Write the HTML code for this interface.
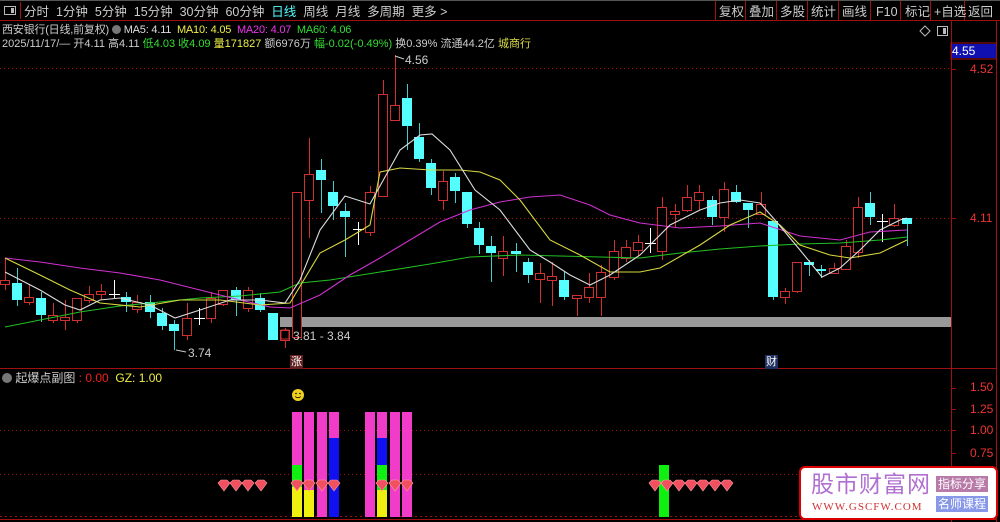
<!DOCTYPE html>
<html><head><meta charset="utf-8">
<style>
body{margin:0;background:#000;width:1000px;height:522px;overflow:hidden;position:relative;font-family:"Liberation Sans","Noto Sans CJK SC",sans-serif;font-size:12px;color:#ccc}
.t{position:absolute;white-space:nowrap;line-height:14px}
svg{position:absolute;left:0;top:0}
</style></head><body>
<svg id="s" width="1000" height="522" xmlns="http://www.w3.org/2000/svg"></svg>
<div class="t" style="left:24px;top:5px;font-size:12.5px;word-spacing:0">分时 &nbsp;1分钟 &nbsp;5分钟 &nbsp;15分钟 &nbsp;30分钟 &nbsp;60分钟 &nbsp;<span style="color:#5ff">日线</span> &nbsp;周线 &nbsp;月线 &nbsp;多周期 &nbsp;更多 &gt;</div>
<div class="t" style="left:719px;top:5px;font-size:12.5px">复权</div>
<div class="t" style="left:749px;top:5px;font-size:12.5px">叠加</div>
<div class="t" style="left:780px;top:5px;font-size:12.5px">多股</div>
<div class="t" style="left:811px;top:5px;font-size:12.5px">统计</div>
<div class="t" style="left:842px;top:5px;font-size:12.5px">画线</div>
<div class="t" style="left:876px;top:5px;font-size:12.5px">F10</div>
<div class="t" style="left:905px;top:5px;font-size:12.5px">标记</div>
<div class="t" style="left:934px;top:5px;font-size:12.5px">+自选</div>
<div class="t" style="left:968px;top:5px;font-size:12.5px">返回</div>
<div class="t" style="left:2px;top:23px;font-size:11px;letter-spacing:-0.2px">西安银行(日线,前复权) <span style="display:inline-block;width:9px;height:9px;border-radius:50%;background:#777;vertical-align:-1px"></span> <span style="color:#ddd">MA5: 4.11</span> &nbsp;<span style="color:#ee4">MA10: 4.05</span> &nbsp;<span style="color:#e3e">MA20: 4.07</span> &nbsp;<span style="color:#3d3">MA60: 4.06</span></div>
<div class="t" style="left:2px;top:37px;font-size:11px;letter-spacing:0px">2025/11/17/— 开4.11 高4.11 <span style="color:#3d3">低4.03</span> <span style="color:#3d3">收4.09</span> <span style="color:#ee4">量171827</span> 额6976万 <span style="color:#3d3">幅-0.02(-0.49%)</span> 换0.39% 流通44.2亿 <span style="color:#dd4">城商行</span></div>
<div class="t" style="left:952px;top:44px;width:44px;height:14px;background:#1010b0;color:#fff">4.55</div>
<div class="t" style="left:970px;top:62px;color:#e33">4.52</div>
<div class="t" style="left:970px;top:211px;color:#e33">4.11</div>
<div class="t" style="left:405px;top:53px;color:#ccc">4.56</div>
<div class="t" style="left:188px;top:346px;color:#ccc">3.74</div>
<div class="t" style="left:293px;top:329px;color:#ccc">3.81 - 3.84</div>
<div class="t" style="left:290px;top:355px;background:#602020;color:#fff;font-size:11px;padding:0 1px">涨</div>
<div class="t" style="left:765px;top:355px;background:#203060;color:#fff;font-size:11px;padding:0 1px">财</div>
<div class="t" style="left:2px;top:371px"><span style="display:inline-block;width:10px;height:10px;border-radius:50%;background:#777;vertical-align:-1px"></span> 起爆点副图 <span style="color:#e22">: 0.00</span> &nbsp;<span style="color:#ee4">GZ: 1.00</span></div>
<div class="t" style="left:970px;top:380px;color:#e33">1.50</div>
<div class="t" style="left:970px;top:402px;color:#e33">1.25</div>
<div class="t" style="left:970px;top:423px;color:#e33">1.00</div>
<div class="t" style="left:970px;top:446px;color:#e33">0.75</div>
<div style="position:absolute;left:799px;top:466px;width:195px;height:50px;background:#fff;border:2px solid #d00;border-radius:6px"></div>
<div class="t" style="left:811px;top:471px;font-size:23px;line-height:26px;color:#b070d0;letter-spacing:1px">股市财富网</div>
<div class="t" style="left:812px;top:500px;font-size:11px;color:#d03030;font-family:'Liberation Serif',serif;letter-spacing:1px">WWW.GSCFW.COM</div>
<div class="t" style="left:936px;top:476px;width:52px;height:16px;background:#b87aa8;color:#fff;font-size:12px;text-align:center;line-height:16px">指标分享</div>
<div class="t" style="left:936px;top:496px;width:52px;height:16px;background:#8898e8;color:#fff;font-size:12px;text-align:center;line-height:16px">名师课程</div>
<script>
var s=document.getElementById('s'),h='';
function L(x1,y1,x2,y2,c,d){h+='<line x1="'+x1+'" y1="'+y1+'" x2="'+x2+'" y2="'+y2+'" stroke="'+c+'"'+(d?' stroke-dasharray="'+d+'"':'')+'/>';}
function R(x,y,w,hh,f,st){h+='<rect x="'+x+'" y="'+y+'" width="'+w+'" height="'+hh+'" fill="'+f+'"'+(st?' stroke="'+st+'"':'')+'/>';}
L(0,20.5,1000,20.5,'#a01010');L(0,0.5,1000,0.5,'#555');
R(4.5,6.5,11,8,'none','#bbb');R(11,8,3,5,'#bbb');L(20.5,2,20.5,19,'#a01010');
[715,745,776,807,838,870,900,930,964].forEach(function(x){L(x+.5,1,x+.5,20,'#a01010')});
L(951.5,20,951.5,522,'#a01010');L(996.5,20,996.5,522,'#a01010');
L(0,368.5,996,368.5,'#a01010');L(0,519.5,996,519.5,'#a01010');
L(0,68.5,951,68.5,'#a01010','1,3');L(0,218.5,951,218.5,'#a01010','1,3');
L(0,430.5,951,430.5,'#a01010','1,3');L(0,474.5,951,474.5,'#a01010','1,3');L(0,516.5,951,516.5,'#a01010','2,3');
R(951,43,45,16,'none','#a01010');
[69,218].forEach(function(y){L(951,y+.5,956,y+.5,'#a01010')});
[388,409,430,453].forEach(function(y){L(951,y+.5,956,y+.5,'#a01010')});
R(280,317,671,10,'#999');
h+='<path d="M925 26 L930 31 L925 36 L920 31Z" fill="none" stroke="#bbb"/>';
R(937.5,26.5,10,9,'none','#bbb');R(943,28,3,6,'#bbb');
var C=[[5,280,284,258,290,'r'],[17,283,300,268,306,'c'],[29,297,302,284,305,'r'],[41,298,315,292,322,'c'],[53,315,320,303,323,'r'],[65,317,320,300,330,'r'],[77,298,320,298,323,'r'],[89,294,300,286,303,'r'],[101,291,294,284,300,'r'],[114,294,294,280,298,'w'],[126,297,302,292,312,'c'],[137,302,309,295,313,'r'],[150,302,312,295,318,'c'],[162,313,326,308,330,'c'],[174,324,331,320,350,'c'],[187,318,335,303,340,'r'],[199,318,318,308,325,'w'],[211,298,318,292,323,'r'],[223,290,304,290,306,'r'],[236,290,300,287,316,'c'],[248,290,308,287,312,'r'],[260,298,310,293,312,'c'],[273,313,340,313,340,'c'],[285,330,340,328,348,'r'],
[297,192,337,192,340,'r'],[309,174,200,138,238,'r'],[321,170,180,159,213,'c'],[333,192,206,181,220,'c'],[345,211,217,203,257,'c'],[358,229,229,222,245,'w'],[370,192,232,186,236,'r'],[383,94,196,80,196,'r'],[395,105,120,55,120,'r'],[407,98,126,84,150,'c'],[419,137,159,123,162,'c'],[431,163,188,159,195,'c'],[443,181,200,171,210,'r'],[455,177,191,173,203,'c'],[467,192,224,192,228,'c'],[479,228,245,222,254,'c'],[491,246,253,236,282,'c'],[503,251,258,236,276,'r'],[516,251,254,243,272,'c'],[528,262,275,258,283,'c'],[540,273,279,263,303,'r'],[552,276,280,262,306,'r'],[564,280,297,272,300,'c'],[577,295,298,295,316,'r'],[589,287,297,273,303,'r'],[601,272,297,265,316,'r'],
[614,251,277,240,280,'r'],[626,247,258,240,262,'r'],[638,242,250,235,256,'r'],[650,243,243,228,253,'w'],[662,207,251,197,260,'r'],[675,211,214,204,228,'r'],[687,197,210,185,212,'r'],[699,192,200,185,210,'r'],[712,200,217,196,225,'c'],[724,189,217,182,232,'r'],[736,192,202,185,203,'c'],[748,203,210,203,228,'c'],[761,204,214,192,215,'r'],[773,221,297,221,300,'c'],[785,291,297,288,304,'r'],[797,262,291,262,293,'r'],[809,262,265,260,276,'c'],[821,269,271,265,278,'c'],[834,268,273,263,273,'r'],[846,246,269,240,270,'r'],[858,207,252,197,258,'r'],[870,203,217,192,225,'c'],[882,221,221,214,242,'w'],[894,218,225,204,227,'r'],[907,218,224,218,246,'c']];
C.forEach(function(c){var x=c[0];
 if(c[5]=='r'){L(x+.5,c[3],x+.5,c[1],'#d03030');L(x+.5,c[2],x+.5,c[4],'#d03030');R(x-4.5,c[1]+.5,9,Math.max(c[2]-c[1],2),'#000','#d03030');}
 else if(c[5]=='c'){L(x+.5,c[3],x+.5,c[4],'#4cc');R(x-5,c[1],10,Math.max(c[2]-c[1],2),'#5ff');}
 else{L(x+.5,c[3],x+.5,c[4],'#fff');L(x-5,c[1]+.5,x+6,c[1]+.5,'#fff');}
});
function P(pts,c){h+='<polyline fill="none" stroke="'+c+'" stroke-width="1.1" points="'+pts+'"/>';}
P('5,327 40,320 80,312 120,306 160,302 200,298 240,296 280,292 300,283 330,280 380,272 430,264 470,257 520,255 560,256 600,257 640,258 680,253 720,249 760,246 800,244 840,243 880,240 907,237','#22c022');
P('5,258 40,262 80,268 120,273 160,280 200,290 240,300 270,307 290,308 320,295 350,275 380,258 410,240 440,222 470,210 500,202 530,197 560,195 590,205 610,215 640,223 680,228 720,226 760,223 800,236 840,240 870,232 907,230','#d030d0');
P('5,258 40,275 70,290 100,303 140,307 180,300 220,300 260,305 290,303 320,253 345,240 370,225 380,172 400,168 430,170 460,170 480,172 500,180 520,200 550,240 580,255 610,272 640,272 660,268 700,245 730,225 760,212 780,225 800,245 830,255 850,258 880,253 907,240','#d8d840');
P('5,272 40,290 65,305 80,310 100,300 120,298 150,305 175,318 200,310 230,300 260,300 285,303 300,280 320,230 345,196 370,204 400,150 420,135 432,134 450,150 475,190 500,210 530,250 550,262 570,275 590,285 610,275 640,255 670,225 700,210 720,203 740,200 760,203 775,220 800,250 822,277 840,268 860,250 880,230 900,220 907,218','#ddd');
h+='<polyline fill="none" stroke="#ccc" points="395,56 398,57 404,59"/><polyline fill="none" stroke="#ccc" points="176,350 186,352"/>';
R(281,330,8,9,'none','#d03030');
function B(x,segs){segs.forEach(function(g){R(x,g[0],10,g[1]-g[0],g[2])});}
var M='#f03cc8',G='#10f010',Y='#f0f010',U='#1010f0';
B(292,[[412,465,M],[465,487,G],[487,517,Y]]);B(304,[[412,490,M],[490,517,Y]]);B(317,[[412,517,M]]);B(329,[[412,438,M],[438,517,U]]);
B(365,[[412,517,M]]);B(377,[[412,438,M],[438,465,U],[465,490,G],[490,517,Y]]);B(390,[[412,517,M]]);B(402,[[412,517,M]]);
B(659,[[465,517,G]]);
function gem(x){h+='<path d="M'+(x-6)+' 483 L'+(x-3)+' 480 L'+(x+3)+' 480 L'+(x+6)+' 483 L'+x+' 491Z" fill="#f05060" stroke="#ff9aa0" stroke-width=".6"/>';}
[224,236,248,261,297,309,322,334,382,395,407,655,667,679,691,703,715,727].forEach(gem);
h+='<circle cx="298" cy="395" r="6" fill="#f0d020"/><circle cx="296" cy="393.5" r=".8" fill="#000"/><circle cx="300" cy="393.5" r=".8" fill="#000"/><path d="M295 396.5 Q298 399 301 396.5" stroke="#000" fill="none" stroke-width=".8"/>';
s.innerHTML=h;
</script>
</body></html>
